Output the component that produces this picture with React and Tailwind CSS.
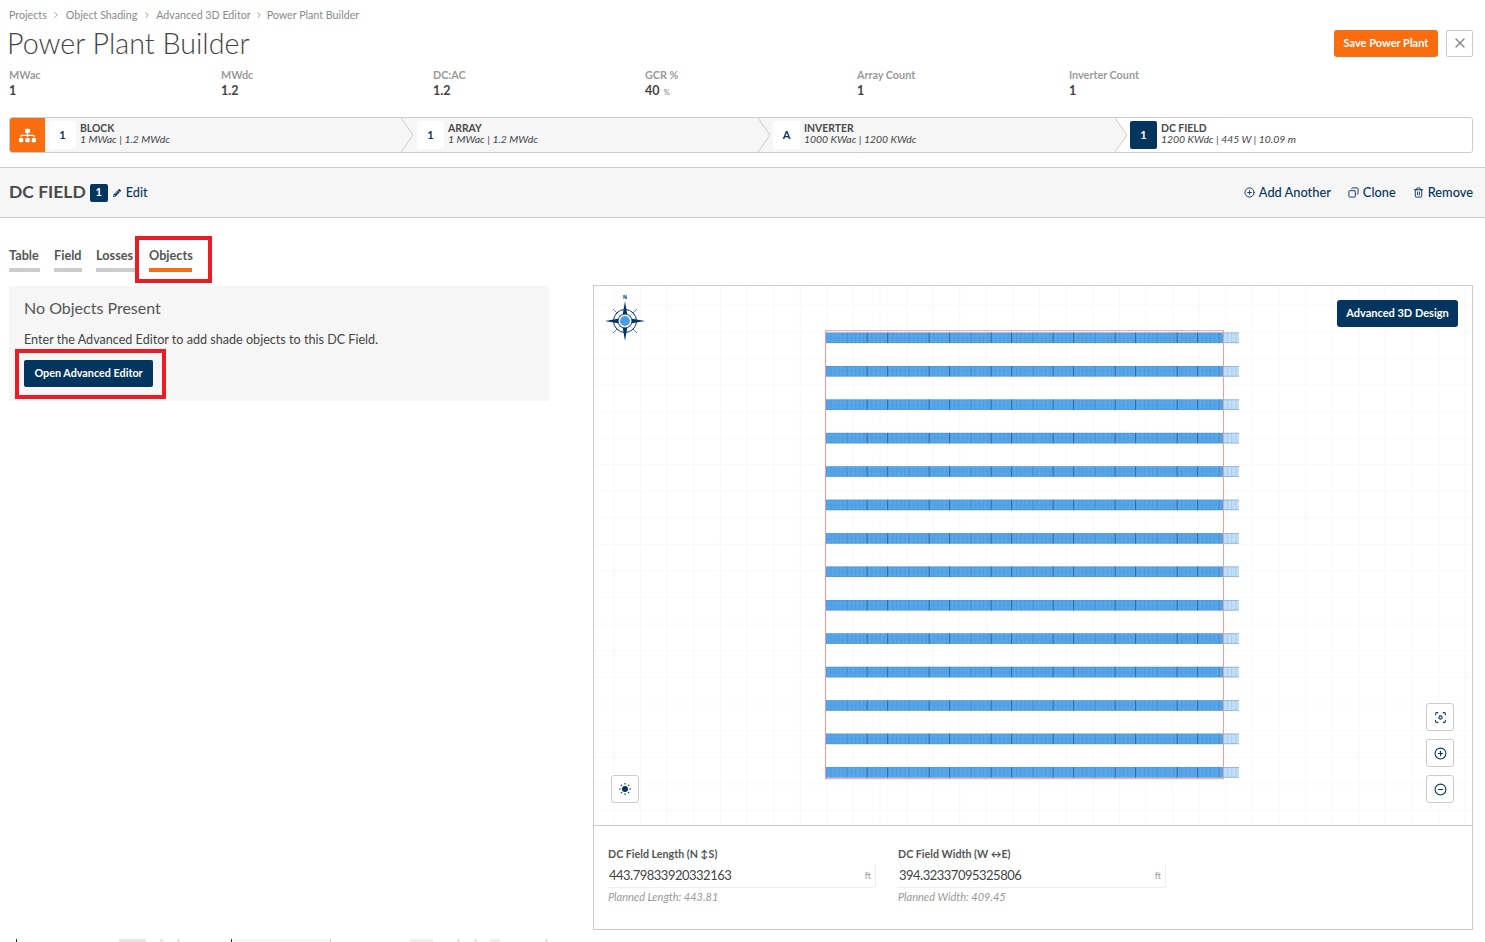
import React from "react";
import { FaSitemap, FaPencilAlt } from "react-icons/fa";
import { X, CirclePlus, CircleMinus, Copy, Trash2, Focus, ChevronRight } from "lucide-react";

const rows = Array.from({ length: 14 }, (_, i) => 46.6 + i * 33.42);

function Chevron({ last }) {
  return (
    <svg className="absolute right-0 top-0 h-full w-[12px]" viewBox="0 0 12 34" preserveAspectRatio="none">
      {last && <path d="M0 0H12V34H0L12 17Z" fill="#ffffff" />}
      <path d="M0 0L12 17L0 34" fill="none" stroke="#cccccc" strokeWidth="1" />
    </svg>
  );
}

function Step({ id, title, sub, w, pad, active, chevron, last }) {
  return (
    <div className={`relative flex items-center shrink-0 ${pad} ${w} ${active ? "bg-white flex-1" : "bg-[#f6f6f6]"}`}>
      <div className={`flex h-[28px] w-[27px] items-center justify-center rounded-[2px] text-[11px] font-bold ${active ? "bg-[#03355e] text-white" : "bg-white text-[#03355e]"}`}>{id}</div>
      <div className="relative -top-[1px] ml-[4px] text-[10.4px] leading-[11px] text-[#444]">
        <div className="font-bold uppercase text-[#4a4a4a]">{title}</div>
        <div className="italic">{sub}</div>
      </div>
      {chevron && <Chevron last={last} />}
    </div>
  );
}

function Stat({ label, value, unit }) {
  return (
    <div className="w-[212px] shrink-0">
      <div className="text-[10.8px] leading-[13px] font-bold text-[#9a9a9a]">{label}</div>
      <div className="mt-[3px] text-[12.5px] leading-[14px] font-bold text-[#444]">
        {value}
        {unit && <span className="ml-[4px] text-[8px] font-normal text-[#888]">{unit}</span>}
      </div>
    </div>
  );
}

function Tab({ children, active, w }) {
  return (
    <div className={`whitespace-nowrap border-b-[4px] pb-[4px] text-[12.7px] leading-[18px] font-bold text-[#555] ${w} ${active ? "border-[#f96d0f]" : "border-[#cccccc]"}`}>{children}</div>
  );
}

function MapButton({ children }) {
  return (
    <button className="flex h-[28px] w-[28px] items-center justify-center rounded-[3px] border border-[#cccccc] bg-white text-[#03355e]">{children}</button>
  );
}

function Field({ label, value, hint, w }) {
  return (
    <div className={w}>
      <div className="text-[10.7px] leading-[14px] font-bold text-[#555]">{label}</div>
      <div className="mt-[3px] flex h-[24px] items-center justify-between rounded-br-[3px] border-r border-b border-[#eeeeee] pl-[1px] pr-[4px]">
        <span className="text-[13px] tracking-[-0.5px] text-[#444]">{value}</span>
        <span className="text-[9px] text-[#999]">ft</span>
      </div>
      <div className="mt-[2px] text-[11px] leading-[14px] italic text-[#999]">{hint}</div>
    </div>
  );
}

function Compass() {
  return (
    <svg width="40" height="52" viewBox="0 0 40 52" className="absolute left-[11px] top-[6px]">
      <text x="20" y="7" textAnchor="middle" fontSize="5.5" fontWeight="700" fill="#03355e" fontFamily="Liberation Sans, sans-serif">N</text>
      <g stroke="#03355e" strokeWidth="0.8" fill="none">
        <path d="M8 17L32 41M32 17L8 41" opacity="0.75" />
      </g>
      <circle cx="20" cy="29" r="11.5" fill="#ffffff" fillOpacity="0.7" stroke="#03355e" strokeWidth="1" />
      <circle cx="20" cy="29" r="7" fill="#ffffff" stroke="#03355e" strokeWidth="1" />
      <circle cx="20" cy="29" r="5" fill="#4a9ee8" />
      <g fill="#03355e">
        <path d="M20 9L22.2 22H17.8Z" />
        <path d="M20 49L22.2 36H17.8Z" />
        <path d="M0 29L13 26.8V31.2Z" />
        <path d="M40 29L27 26.8V31.2Z" />
      </g>
    </svg>
  );
}

function FieldDrawing() {
  return (
    <svg className="absolute inset-0 h-full w-full" viewBox="0 0 878 539" preserveAspectRatio="none">
      <defs>
        <pattern id="grid" x="19.5" y="18.5" width="26.6" height="26.6" patternUnits="userSpaceOnUse">
          <path d="M0 0H26.6M0 0V26.6" stroke="#f3f3f3" strokeWidth="1.2" fill="none" />
        </pattern>
        <pattern id="cells" x="232" y="0" width="4.13" height="6" patternUnits="userSpaceOnUse">
          <rect width="1" height="6" fill="#3b82c4" opacity="0.3" />
        </pattern>
        <pattern id="mods" x="232" y="0" width="62" height="6" patternUnits="userSpaceOnUse">
          <rect x="20.6" width="1" height="6" fill="#2b6aa3" opacity="0.3" />
          <rect x="40.6" width="1" height="6" fill="#245a8c" opacity="0.75" />
          <rect x="61" width="1" height="6" fill="#245a8c" opacity="0.75" />
        </pattern>
        <pattern id="cellsL" x="629" y="0" width="4.13" height="6" patternUnits="userSpaceOnUse">
          <rect width="1" height="6" fill="#8fbde6" opacity="0.5" />
        </pattern>
      </defs>
      <rect width="878" height="539" fill="url(#grid)" />
      {rows.map((y) => (
        <g key={y}>
          <rect x="232" y={y} width="397" height="10.5" fill="#58a6ea" />
          <rect x="232" y={y} width="397" height="10.5" fill="url(#cells)" />
          <rect x="232" y={y} width="397" height="10.5" fill="url(#mods)" />
          <rect x="232" y={y + 5} width="397" height="0.6" fill="#3b82c4" opacity="0.2" />
          <rect x="232" y={y} width="397" height="0.6" fill="#3b82c4" opacity="0.45" />
          <rect x="232" y={y + 9.9} width="397" height="0.6" fill="#3b82c4" opacity="0.45" />
          <rect x="629" y={y} width="16" height="10.5" fill="#c0def8" />
          <rect x="629" y={y} width="16" height="10.5" fill="url(#cellsL)" />
          <rect x="629" y={y} width="16" height="0.7" fill="#8fa9c2" />
          <rect x="629" y={y + 9.8} width="16" height="0.7" fill="#8fa9c2" />
        </g>
      ))}
      <rect x="231.5" y="44.7" width="398" height="448" fill="none" stroke="#f09c9c" strokeWidth="1" />
    </svg>
  );
}

function SunIcon() {
  return (
    <svg width="12" height="12" viewBox="0 0 12 12" fill="#03355e">
      <circle cx="6" cy="6" r="3" />
      <g stroke="#03355e" strokeWidth="1.1">
        <path d="M6 0V1.6M6 10.4V12M0 6H1.6M10.4 6H12M1.8 1.8L2.9 2.9M9.1 9.1L10.2 10.2M1.8 10.2L2.9 9.1M9.1 2.9L10.2 1.8" />
      </g>
    </svg>
  );
}

function BottomPeek() {
  return (
    <svg className="mt-[9px] block h-[3px] w-full" viewBox="0 0 1485 3" preserveAspectRatio="none">
      <rect x="16" width="1" height="3" fill="#03355e" />
      <rect x="119" width="27" height="3" fill="#e6e6e6" />
      <rect x="160" width="3" height="3" fill="#e6e6e6" />
      <rect x="177" width="3" height="3" fill="#e6e6e6" />
      <rect x="231" width="1" height="3" fill="#03355e" />
      <rect x="233" width="97" height="3" fill="#f6f6f6" />
      <rect x="330" width="1" height="3" fill="#cccccc" />
      <rect x="410" width="23" height="3" fill="#eeeeee" />
      <rect x="457" width="3" height="3" fill="#e6e6e6" />
      <rect x="474" width="3" height="3" fill="#e6e6e6" />
      <rect x="490" width="10" height="3" fill="#eeeeee" />
      <rect x="545" width="3" height="3" fill="#e6e6e6" />
    </svg>
  );
}

export default function App() {
  return (
    <div className="relative h-[942px] w-full overflow-hidden bg-white font-['Lato','Liberation_Sans',sans-serif] text-[#444]">
      <div className="flex flex-col">
        <div className="flex h-[25px] items-start gap-[4.5px] pl-[9px] pt-[8px] text-[10.7px] leading-[13px] text-[#8a8a8a]">
          <span>Projects</span>
          <ChevronRight size={10} className="mt-[2px]" />
          <span>Object Shading</span>
          <ChevronRight size={10} className="mt-[2px]" />
          <span>Advanced 3D Editor</span>
          <ChevronRight size={10} className="mt-[2px] -mx-[1.5px]" />
          <span>Power Plant Builder</span>
        </div>
        <div className="flex h-[36px] items-center justify-between pl-[7px] pr-[12px]">
          <div className="text-[28.7px] leading-[30px] font-light text-[#444]">Power Plant Builder</div>
          <div className="flex items-center gap-[8px]">
            <button className="h-[27px] w-[104px] rounded-[3px] bg-[#f96d0f] text-[11px] font-bold text-white">Save Power Plant</button>
            <button className="flex h-[27px] w-[27px] items-center justify-center rounded-[2px] border border-[#cccccc] text-[#888]"><X size={16} /></button>
          </div>
        </div>
        <div className="mt-[7px] flex pl-[9px]">
          <Stat label="MWac" value="1" />
          <Stat label="MWdc" value="1.2" />
          <Stat label="DC:AC" value="1.2" />
          <Stat label="GCR %" value="40" unit="%" />
          <Stat label="Array Count" value="1" />
          <Stat label="Inverter Count" value="1" />
        </div>
        <div className="ml-[9px] mr-[12px] mt-[18px] flex h-[36px] overflow-hidden rounded-[3px] border border-[#cccccc]">
          <div className="flex w-[35px] shrink-0 items-center justify-center bg-[#f96d0f] text-white"><FaSitemap size={17} /></div>
          <Step id="1" title="Block" sub="1 MWac | 1.2 MWdc" w="w-[368px]" pad="pl-[4px]" chevron />
          <Step id="1" title="Array" sub="1 MWac | 1.2 MWdc" w="w-[357px]" pad="pl-[4px]" chevron />
          <Step id="A" title="Inverter" sub="1000 KWac | 1200 KWdc" w="w-[357px]" pad="pl-[3px]" chevron last />
          <Step id="1" title="DC Field" sub="1200 KWdc | 445 W | 10.09 m" pad="pl-[3px]" active />
        </div>
        <div className="mt-[14px] flex h-[51px] items-center justify-between border-y border-[#cccccc] bg-[#f6f6f6] pl-[9px] pr-[12px]">
          <div className="flex items-center">
            <span className="text-[17.5px] font-bold text-[#4a4a4a]">DC FIELD</span>
            <span className="ml-[4px] flex h-[18px] w-[18px] items-center justify-center rounded-[2px] bg-[#03355e] text-[11px] font-bold text-white">1</span>
            <FaPencilAlt size={8} className="ml-[5px] text-[#03355e]" />
            <span className="ml-[5px] text-[12.7px] font-medium text-[#03355e]">Edit</span>
          </div>
          <div className="flex items-center gap-[17px] text-[12.8px] font-medium text-[#03355e]">
            <span className="flex items-center gap-[4px]"><CirclePlus size={11} />Add Another</span>
            <span className="flex items-center gap-[4px]"><Copy size={11} className="-scale-x-100" />Clone</span>
            <span className="flex items-center gap-[4px]"><Trash2 size={11} />Remove</span>
          </div>
        </div>
        <div className="flex gap-[44px] pl-[9px] pr-[12px] pt-[28px]">
          <div className="w-[540px] shrink-0">
            <div className="flex gap-[14px]">
              <Tab w="w-[31px]">Table</Tab>
              <Tab w="w-[28px]">Field</Tab>
              <Tab w="w-[39px]">Losses</Tab>
              <Tab w="w-[43px]" active>Objects</Tab>
            </div>
            <div className="mt-[14px] h-[115px] bg-[#f6f6f6] pl-[15px] pt-[12px]">
              <div className="text-[16px] leading-[20px] text-[#555]">No Objects Present</div>
              <div className="mt-[13px] text-[12.6px] leading-[18px] text-[#444]">Enter the Advanced Editor to add shade objects to this DC Field.</div>
              <button className="mt-[11px] h-[27px] w-[129px] rounded-[2px] bg-[#03355e] text-[10.8px] font-bold text-white">Open Advanced Editor</button>
            </div>
          </div>
          <div className="mt-[39px] flex-1 border border-[#cccccc]">
            <div className="relative h-[540px] overflow-hidden border-b border-[#cccccc]">
              <FieldDrawing />
              <Compass />
              <button className="absolute right-[14px] top-[14px] h-[27px] w-[121px] rounded-[3px] bg-[#03355e] text-[11px] font-bold text-white">Advanced 3D Design</button>
              <div className="absolute left-[17px] top-[489px]"><MapButton><SunIcon /></MapButton></div>
              <div className="absolute right-[18px] top-[417px] flex flex-col gap-[8px]">
                <MapButton><Focus size={13} /></MapButton>
                <MapButton><CirclePlus size={13} /></MapButton>
                <MapButton><CircleMinus size={13} /></MapButton>
              </div>
            </div>
            <div className="flex h-[103px] gap-[22px] pl-[14px] pt-[21px]">
              <Field w="w-[268px]" label="DC Field Length (N ↕S)" value="443.79833920332163" hint="Planned Length: 443.81" />
              <Field w="w-[268px]" label="DC Field Width (W ↔E)" value="394.32337095325806" hint="Planned Width: 409.45" />
            </div>
          </div>
        </div>
        <BottomPeek />
      </div>
      <div className="absolute left-[135px] top-[236px] h-[47px] w-[77px] border-[4px] border-[#ed1c24]" />
      <div className="absolute left-[15px] top-[349px] h-[50px] w-[151px] border-[4px] border-[#ed1c24]" />
    </div>
  );
}
